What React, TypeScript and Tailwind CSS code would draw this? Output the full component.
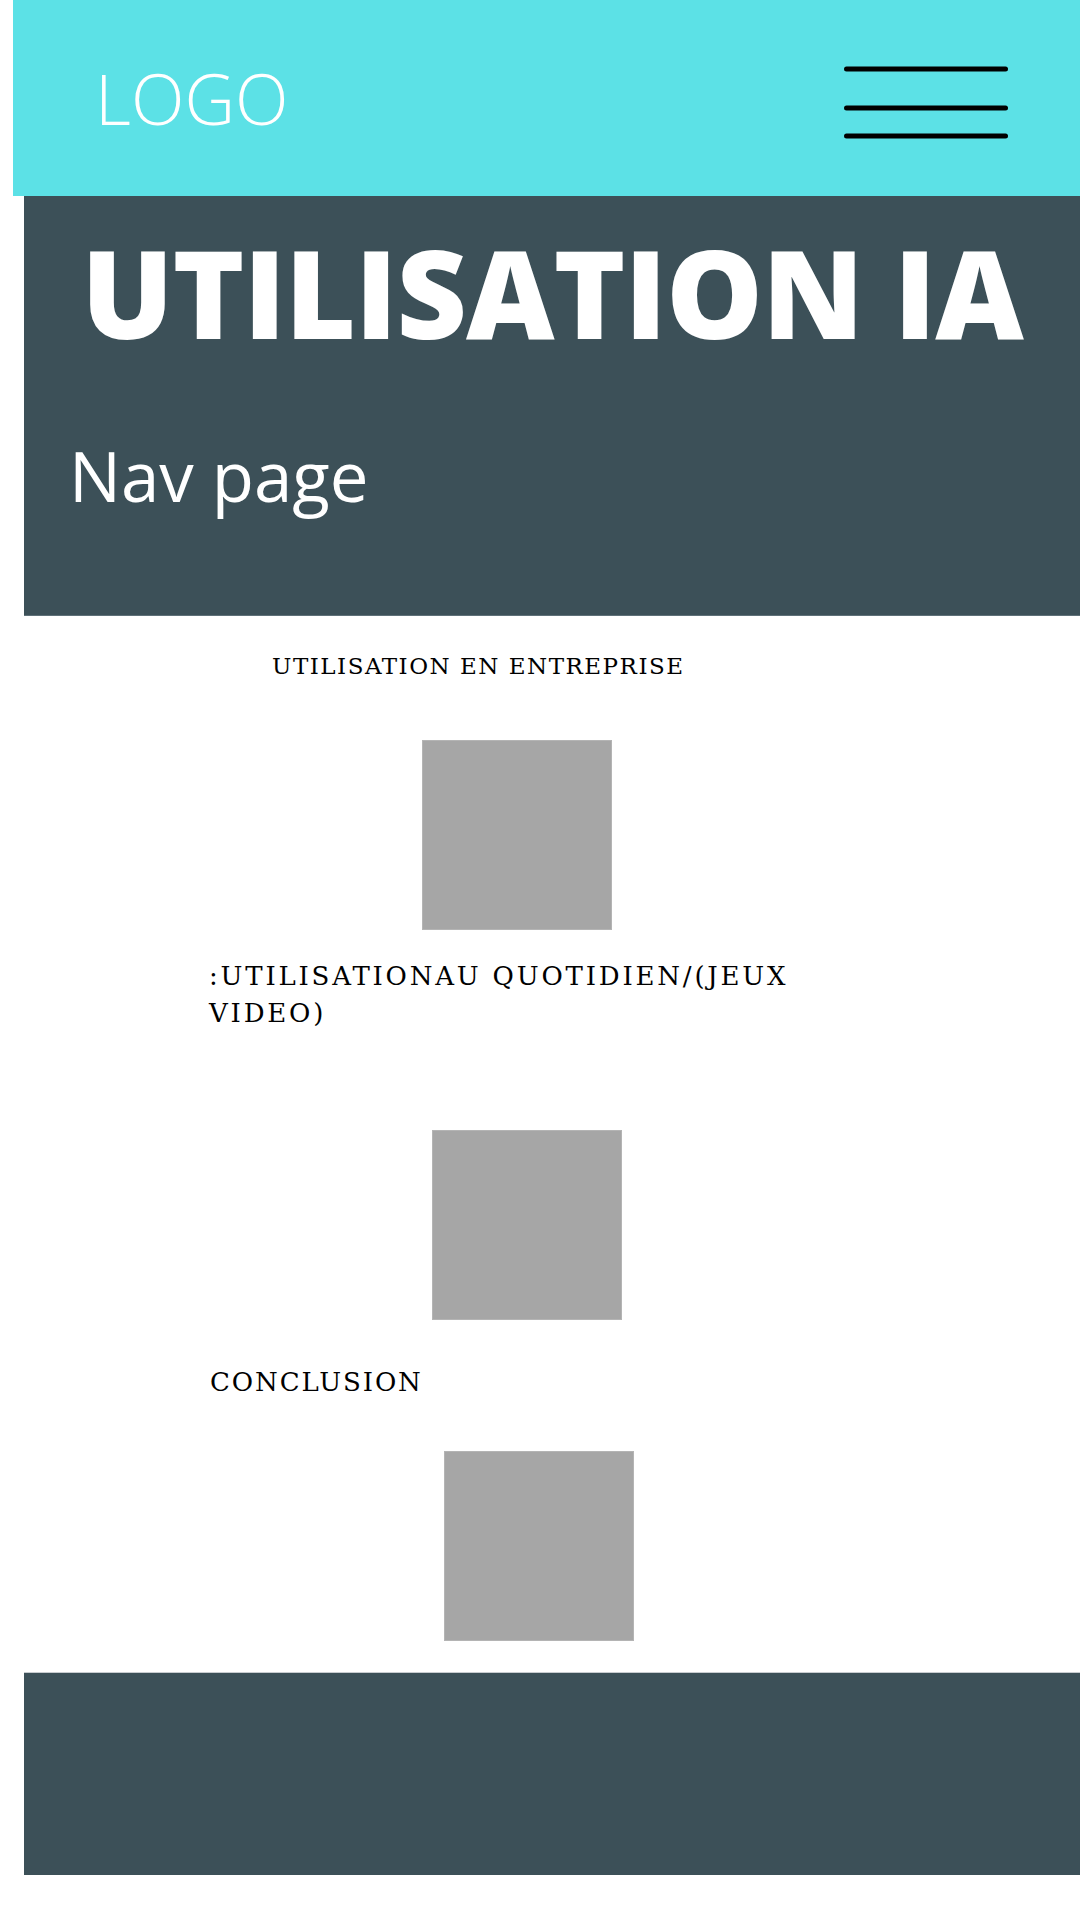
import React from 'react';

const openSans = { fontFamily: '"Open Sans", "Noto Sans", sans-serif' };

function Hamburger() {
  return (
    <svg width="170" height="80" viewBox="0 0 170 80" className="mt-[64px] self-start">
      <line x1="5.5" y1="5" x2="164.5" y2="5" stroke="#000" strokeWidth="5" strokeLinecap="round" />
      <line x1="5.5" y1="44" x2="164.5" y2="44" stroke="#000" strokeWidth="5" strokeLinecap="round" />
      <line x1="5.5" y1="72" x2="164.5" y2="72" stroke="#000" strokeWidth="5" strokeLinecap="round" />
    </svg>
  );
}

function Placeholder({ className }: { className: string }) {
  return <div className={`h-[190px] w-[190px] bg-[#a6a6a6] border border-[#b4b4b4] ${className}`} />;
}

export default function App() {
  return (
    <div className="relative w-[1080px] h-[1920px] bg-white overflow-hidden" style={openSans}>
      {/* Header */}
      <header className="ml-[13px] h-[196px] bg-[#5ce1e6] flex items-center justify-between pl-[82px] pr-[69px]">
        <span className="text-[70px] leading-none text-white font-light">LOGO</span>
        <Hamburger />
      </header>

      {/* Hero */}
      <section className="ml-[24px] h-[420px] bg-[#3c5058] border-b border-[#5e7078] pt-[35px]">
        <h1 className="text-[122px] leading-none font-extrabold text-white text-center tracking-[-1px]">
          UTILISATION IA
        </h1>
        <p className="mt-[88px] pl-[45px] text-[69px] leading-none text-white font-normal">Nav page</p>
      </section>

      {/* Content */}
      <main className="flex flex-col items-start font-['DejaVu_Serif',serif] text-black">
        <h2 className="ml-[272px] mt-[37px] text-[23px] leading-[26px] tracking-[1.5px]">UTILISATION EN ENTREPRISE</h2>
        <Placeholder className="ml-[422px] mt-[61px]" />
        <h2 className="ml-[209px] mt-[28px] w-[640px] text-[26px] leading-[37px] tracking-[2.8px]">
          :UTILISATIONAU QUOTIDIEN/(JEUX VIDEO)
        </h2>
        <Placeholder className="ml-[432px] mt-[98px]" />
        <h2 className="ml-[210px] mt-[44px] text-[26px] leading-[37px] tracking-[1.9px]">CONCLUSION</h2>
        <Placeholder className="ml-[444px] mt-[50px]" />
      </main>

      {/* Footer */}
      <footer className="ml-[24px] mt-[31px] h-[203px] bg-[#3c5058] border-t border-[#c8ccd0]" />
    </div>
  );
}
